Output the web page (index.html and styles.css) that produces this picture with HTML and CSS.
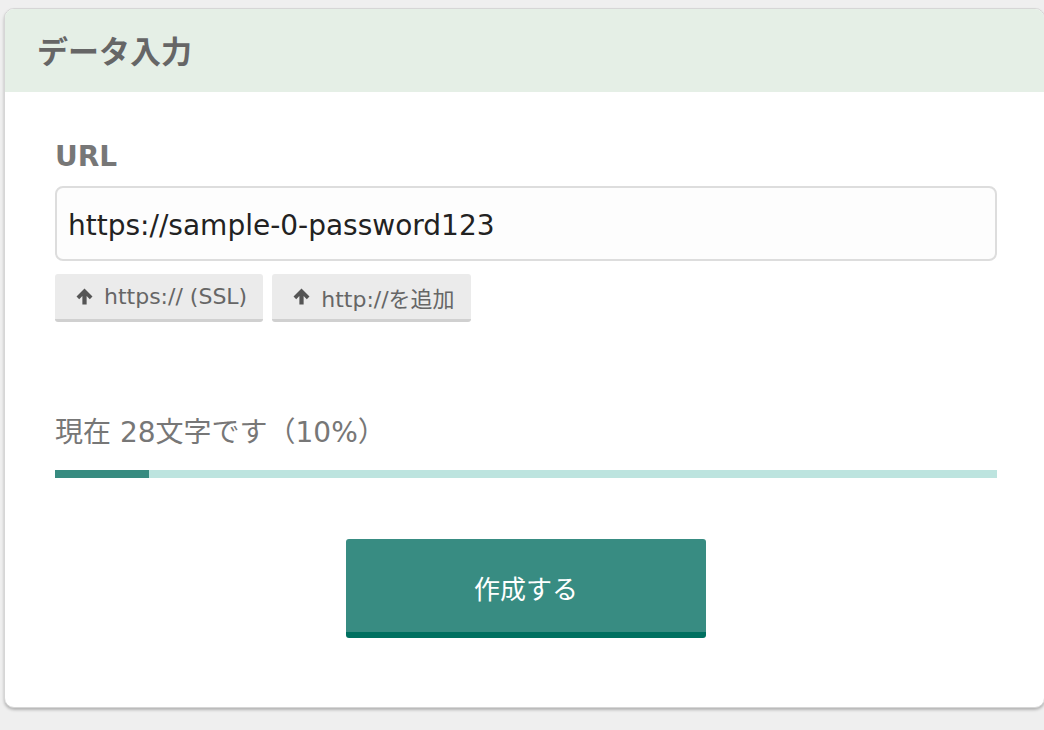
FILE: index.html
```html
<!DOCTYPE html>
<html lang="ja">
<head>
<meta charset="utf-8">
<link rel="stylesheet" href="styles.css">
</head>
<body>
<div class="card">
  <div class="card-head">データ入力</div>
  <div class="card-body">
    <div class="label">URL</div>
    <div class="input">https://sample-0-password123</div>
    <div class="tools">
      <span class="tool"><svg class="arrow" viewBox="0 0 16 16"><path d="M8 0.5 L15.5 8 L13 10.5 L10 7.6 V15.5 H6 V7.6 L3 10.5 L0.5 8 Z"/></svg>https:// (SSL)</span>
      <span class="tool"><svg class="arrow" viewBox="0 0 16 16"><path d="M8 0.5 L15.5 8 L13 10.5 L10 7.6 V15.5 H6 V7.6 L3 10.5 L0.5 8 Z"/></svg>http://を追加</span>
    </div>
    <div class="count">現在 28文字です（10%）</div>
    <div class="progress"><div class="fill" style="width:10%"></div></div>
    <div class="actions"><span class="submit">作成する</span></div>
  </div>
</div>
</body>
</html>
```
FILE: styles.css
```css
html, body {
  margin: 0;
  padding: 0;
  background: #efefef;
  font-family: "DejaVu Sans", "Noto Sans CJK JP", sans-serif;
}
body {
  padding-top: 8px;
  height: 730px;
  box-sizing: border-box;
  overflow: hidden;
}
.card {
  margin-left: 4px;
  width: 1039px;
  background: #fff;
  border: 1px solid #d6d6d6;
  border-radius: 10px;
  box-shadow: 0 2px 3px rgba(0,0,0,0.25);
  overflow: hidden;
}
.card-head {
  height: 83px;
  box-sizing: border-box;
  padding: 0 0 3px 32px;
  background: #e5efe6;
  display: flex;
  align-items: center;
  font-size: 31px;
  font-weight: bold;
  color: #666;
}
.card-body {
  padding: 48px 47px 69px 50px;
}
.label {
  font-size: 28px;
  line-height: 30px;
  padding-top: 2px;
  margin-bottom: -2px;
  font-weight: bold;
  color: #777;
}
.input {
  margin-top: 16px;
  height: 75px;
  box-sizing: border-box;
  border: 2px solid #ddd;
  border-radius: 8px;
  background: #fdfdfd;
  padding: 4px 0 0 11px;
  display: flex;
  align-items: center;
  font-size: 28px;
  color: #222;
}
.tools {
  margin-top: 13px;
  display: flex;
  gap: 9px;
}
.tool {
  height: 48px;
  box-sizing: border-box;
  border-bottom: 3px solid #d0d0d0;
  border-radius: 3px;
  background: #ebebeb;
  display: flex;
  align-items: center;
  padding: 0 16px 0 21px;
  font-size: 22px;
  color: #666;
}
.arrow {
  width: 17px;
  height: 17px;
  flex: none;
  fill: #555;
  margin-right: 11px;
}
.count {
  margin-top: 93px;
  font-size: 28px;
  line-height: 36px;
  color: #777;
}
.progress {
  margin-top: 19px;
  height: 8px;
  background: #bde4df;
}
.fill {
  height: 100%;
  background: #378b80;
}
.actions {
  margin-top: 61px;
  display: flex;
  justify-content: center;
}
.submit {
  width: 360px;
  height: 99px;
  box-sizing: border-box;
  padding-top: 3px;
  background: #388c82;
  border-bottom: 6px solid #007060;
  border-radius: 3px;
  display: flex;
  align-items: center;
  justify-content: center;
  font-size: 26px;
  color: #fff;
}
```
